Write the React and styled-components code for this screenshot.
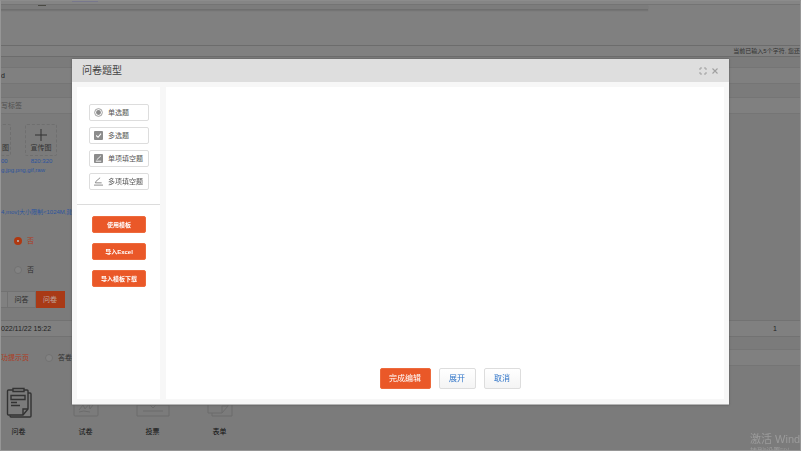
import React, { useState } from "react";
import styled, { createGlobalStyle, css } from "styled-components";

const GlobalStyle = createGlobalStyle`
  * {
    box-sizing: border-box;
  }

  body {
    margin: 0;
    overflow: hidden;
    background: #7b7b7b;
    font-family: "Liberation Sans", "Noto Sans CJK SC", sans-serif;
    font-size: 7px;
    line-height: 10px;
    color: #2a2a2a;
  }

  button,
  input {
    font-family: inherit;
  }
`;

const Page = styled.div`
  height: 100vh;
  overflow: hidden;
  white-space: nowrap;
  display: flex;
  flex-direction: column;
  border: 1px solid #969696;
  border-top-color: #8c8c8c;
`;

const Row = styled.div`
  flex: none;
  display: flex;
  align-items: center;
  height: ${(props) => props.$height}px;
`;

const Strip = styled(Row)`
  align-items: flex-start;
  padding-left: 71px;
  border-bottom: 1px solid #747474;
  background: #858585;
`;

const StripTab = styled.div`
  width: 26px;
  height: 1px;
  background: #77778c;
`;

const Editor = styled.div`
  flex: none;
  height: 52px;
  background: #808080;
  border-bottom: 1px solid #6c6c6c;
  display: flex;
  flex-direction: column;
  justify-content: space-between;
`;

const ShadowBar = styled.div`
  width: 81%;
  height: 5px;
  padding-left: 37px;
  background: #7c7c7c;
  border-bottom: 1px solid #6f6f6f;
  box-shadow: 0 1px 1px #747474;
`;

const Mark = styled.div`
  width: 8px;
  height: 1px;
  background: #4a4a44;
`;

const Counter = styled.div`
  height: 11px;
  border-top: 1px solid #6c6c6c;
  font-size: 6px;
  color: #303030;
  display: flex;
  align-items: center;
  justify-content: flex-end;
`;

const Field = styled.input`
  flex: none;
  display: block;
  width: 100%;
  height: 17px;
  padding: 0;
  margin: 0;
  border: solid #757575;
  border-width: 1px 0;
  background: #808080;
  color: #222;
  font-size: 7px;

  &::placeholder {
    color: #4f4f4f;
    opacity: 1;
  }
`;

const Uploads = styled.div`
  display: flex;
  gap: 14px;
`;

const UploadBox = styled.button`
  flex: none;
  display: flex;
  flex-direction: column;
  align-items: center;
  justify-content: flex-end;
  width: ${(props) => props.$width}px;
  height: 32px;
  padding: 0 0 2px;
  background: none;
  border: 1px dashed #6f6f6f;
  border-left-width: ${(props) => (props.$cut ? 0 : 1)}px;
  border-radius: 2px;
  font-size: 7px;
  line-height: 10px;
  color: #333;

  svg {
    width: 14px;
    height: 14px;
    margin-bottom: 1px;
  }
`;

const Note = styled.div`
  font-size: 6px;
  line-height: 9px;
  color: #2b549f;
`;

const Sizes = styled(Note)`
  display: flex;
  gap: 23px;
  margin-top: 1px;
`;

const RadioLabel = styled.label`
  display: flex;
  align-items: center;
  gap: 5px;
  color: ${(props) => (props.$active ? "#b03a1a" : "#303030")};
`;

const Radio = styled.input`
  appearance: none;
  width: 8px;
  height: 8px;
  margin: 0;
  border: 1px solid #727272;
  border-radius: 50%;
  background: #828282;

  &:checked {
    border: 3px solid #b03810;
    background: #bbb;
  }
`;

const TypeTabs = styled.div`
  display: flex;
  height: 17px;
`;

const TypeTab = styled.button`
  width: ${(props) => props.$width}px;
  padding: 0;
  border: 1px solid #727272;
  border-left-width: 0;
  background: #808080;
  font-size: 7px;
  line-height: 10px;
  color: #292929;

  ${(props) =>
    props.$active &&
    css`
      border-color: #a93a16;
      background: #a93a16;
      color: #c0a8a0;
    `}
`;

const Gap = styled.div`
  flex: none;
  height: ${(props) => props.$size}px;
`;

const Indent = styled.div`
  flex: none;
  padding-left: 13px;
`;

const DateRow = styled(Row)`
  justify-content: space-between;
  padding-right: 23px;
  background: #808080;
  border: solid #727272;
  border-width: 1px 0;
  color: #222;
`;

const ResultRow = styled(Row)`
  gap: 16px;
  color: #b03a1a;
`;

const ResultField = styled(Field)`
  flex: 1;
`;

const Kinds = styled.div`
  display: flex;
`;

const Kind = styled.div`
  width: 67px;
  display: flex;
  flex-direction: column;
  align-items: center;
  gap: 8px;
  color: #111;
  flex: none;
  margin-left: ${(props) => (props.$first ? -16 : 0)}px;

  svg {
    width: 34px;
    height: 32px;
    color: ${(props) => (props.$first ? "#333" : "#6c6c6c")};
  }
`;

const Watermark = styled.div`
  position: fixed;
  right: 0;
  bottom: 0;
  width: 51px;
  height: 19px;
  overflow: hidden;
  white-space: nowrap;
  color: #9b9b9b;
  font-size: 11px;
  line-height: 14px;

  small {
    display: block;
    font-size: 7px;
    line-height: 10px;
  }
`;

const Backdrop = styled.div`
  position: fixed;
  inset: 0;
  display: flex;
  align-items: flex-start;
  justify-content: center;
  padding: 59px 72px 0;
`;

const Modal = styled.div`
  width: 100%;
  height: calc(100vh - 105px);
  display: flex;
  flex-direction: column;
  background: #f7f7f7;
  border: 1px solid #b5b5b5;
  border-width: 0 0 1px;
  box-shadow: 0 0 2px #555;
`;

const ModalHeader = styled.header`
  flex: none;
  display: flex;
  align-items: center;
  justify-content: space-between;
  height: 23px;
  padding: 0 10px;
  background: #dedede;
`;

const Title = styled.h2`
  margin: 0;
  font-size: 10px;
  font-weight: 400;
  line-height: 14px;
  color: #444;
`;

const HeaderButtons = styled.div`
  display: flex;
  gap: 4px;
`;

const IconButton = styled.button`
  display: flex;
  width: 8px;
  height: 8px;
  padding: 0;
  border: none;
  background: none;
  color: #a0a0a0;
  cursor: pointer;
`;

const ModalBody = styled.div`
  flex: 1;
  display: flex;
  gap: 6px;
  padding: 5px;
`;

const Side = styled.aside`
  width: 83px;
  background: #fff;
`;

const QuestionTypes = styled.div`
  display: flex;
  flex-direction: column;
  gap: 6px;
  padding: 17px 11px 14px 12px;
  border-bottom: 1px solid #dcdcdc;
`;

const QuestionButton = styled.button`
  display: flex;
  align-items: center;
  gap: 5px;
  height: 17px;
  padding: 0 0 0 4px;
  border: 1px solid #ddd;
  border-radius: 2px;
  background: #fff;
  font-size: 7px;
  line-height: 10px;
  white-space: nowrap;
  color: #555;
  cursor: pointer;

  svg {
    flex: none;
    width: 9px;
    height: 9px;
    color: #8c8c8c;
  }
`;

const Actions = styled.div`
  display: flex;
  flex-direction: column;
  gap: 10px;
  padding: 11px 14px 0 15px;
`;

const PrimaryButton = styled.button`
  height: ${(props) => (props.$large ? 21 : 17)}px;
  width: ${(props) => (props.$large ? "51px" : "100%")};
  padding: 0;
  border: 1px solid #ed6a3c;
  border-radius: 2px;
  background: #ea5828;
  font-size: ${(props) => (props.$large ? 8 : 6)}px;
  font-weight: ${(props) => (props.$large ? 400 : 700)};
  line-height: 10px;
  white-space: nowrap;
  color: #fff;
  cursor: pointer;
`;

const PlainButton = styled.button`
  height: 21px;
  width: 37px;
  padding: 0;
  border: 1px solid #ddd;
  border-radius: 2px;
  background: linear-gradient(#fff, #f4f4f4);
  font-size: 8px;
  line-height: 10px;
  color: #2f74c8;
  cursor: pointer;
`;

const Canvas = styled.main`
  flex: 1;
  display: flex;
  align-items: flex-end;
  justify-content: center;
  gap: 8px;
  padding: 0 0 10px 10px;
  background: #fff;
`;

const SingleIcon = () => (
  <svg viewBox="0 0 10 10" fill="none" stroke="currentColor">
    <circle cx="5" cy="5" r="4.3" strokeWidth="0.9" />
    <circle cx="5" cy="5" r="2.7" fill="currentColor" stroke="none" />
  </svg>
);

const MultiIcon = () => (
  <svg viewBox="0 0 10 10">
    <rect width="10" height="10" rx="1" fill="currentColor" />
    <path d="M2.500 5l2 2 3.300-4" fill="none" stroke="#fff" strokeWidth="1.2" />
  </svg>
);

const BlankIcon = () => (
  <svg viewBox="0 0 10 10">
    <rect width="10" height="10" rx="1" fill="currentColor" />
    <path d="M3 6.500L7.700 2M2 8h6" fill="none" stroke="#fff" />
  </svg>
);

const MultiBlankIcon = () => (
  <svg viewBox="0 0 10 10" fill="none" stroke="currentColor">
    <path d="M6.800 0.800L2 5l-.5 1.500h7M0 9h10" strokeWidth="1.1" />
  </svg>
);

const ExpandIcon = () => (
  <svg viewBox="0 0 8 8" fill="none" stroke="currentColor">
    <path d="M1 3V1h2M5 1h2v2M7 5v2H5M3 7H1V5" />
  </svg>
);

const CloseIcon = () => (
  <svg viewBox="0 0 8 8" fill="none" stroke="currentColor">
    <path d="M1.500 1.500l5 5M6.500 1.500l-5 5" strokeWidth="1.1" />
  </svg>
);

const SurveyIcon = () => (
  <svg viewBox="0 0 34 32" fill="none" stroke="currentColor" strokeWidth="1.4">
    <path d="M11 3H6.500q-1 0-1 1v23q0 1 1 1H21l5-6V4q0-1-1-1h-3" />
    <path d="M11 1.500h11v3H11zM21 28v-6h5M26 6h2q1 0 1 1v22q0 1-1 1H9q-1 0-1-1.500" />
    <path d="M9 8.500h14v4H9zM9 15.500h6M9 18.500h9" />
  </svg>
);

const ExamIcon = () => (
  <svg viewBox="0 0 34 32" fill="none" stroke="currentColor">
    <rect x="5" y="1" width="24" height="28" rx="1" />
    <path d="M10 23l4-5 2 4 4-5 1 5 3-4M10 25q4-2 11 0" />
  </svg>
);

const VoteIcon = () => (
  <svg viewBox="0 0 34 32" fill="none" stroke="currentColor">
    <path d="M1 18h32v11H1zM4 18l2-6h22l2 6M7 24h20M13 17l4 4 6-6" />
  </svg>
);

const FormIcon = () => (
  <svg viewBox="0 0 34 32" fill="none" stroke="currentColor">
    <path d="M5 1h20v18l-6 7H5zM19 26v-7h6M25 5h4v24H9v-3" />
  </svg>
);

const questionTypes = [
  { label: "单选题", Icon: SingleIcon },
  { label: "多选题", Icon: MultiIcon },
  { label: "单项填空题", Icon: BlankIcon },
  { label: "多项填空题", Icon: MultiBlankIcon },
];

const kinds = [
  { label: "问卷", Icon: SurveyIcon },
  { label: "试卷", Icon: ExamIcon },
  { label: "投票", Icon: VoteIcon },
  { label: "表单", Icon: FormIcon },
];

const actions = ["使用模板", "导入Excel", "导入模板下载"];

const SettingsPage = () => {
  const [name, setName] = useState("d");

  return (
    <Page>
      <Strip $height={4}>
        <StripTab />
      </Strip>
      <Editor>
        <ShadowBar>
          <Mark />
        </ShadowBar>
        <Counter>当前已输入5个字符, 您还</Counter>
      </Editor>
      <Gap $size={10} />
      <Field
        aria-label="名称"
        value={name}
        onChange={(e) => setName(e.target.value)}
      />
      <Gap $size={13} />
      <Field aria-label="标签" placeholder="写标签" />
      <Gap $size={10} />
      <Uploads>
        <UploadBox $width={10} $cut>
          图
        </UploadBox>
        <UploadBox $width={32}>
          <svg viewBox="0 0 14 14" stroke="#333">
            <path d="M7 1v12M1 7h12" />
          </svg>
          宣传图
        </UploadBox>
      </Uploads>
      <Sizes>
        <span>00</span>
        <span>820:320</span>
      </Sizes>
      <Note>g,jpg,png,gif,raw</Note>
      <Gap $size={33} />
      <Note>4,mov]大小限制&lt;1024M,建</Note>
      <Gap $size={19} />
      <Indent>
        <RadioLabel $active>
          <Radio type="radio" name="open" defaultChecked />否
        </RadioLabel>
      </Indent>
      <Gap $size={19} />
      <Indent>
        <RadioLabel>
          <Radio type="radio" name="limit" />否
        </RadioLabel>
      </Indent>
      <Gap $size={16} />
      <TypeTabs>
        <TypeTab $width={7} aria-label="类型" />
        <TypeTab $width={28}>问答</TypeTab>
        <TypeTab $width={29} $active>
          问卷
        </TypeTab>
      </TypeTabs>
      <Gap $size={12} />
      <DateRow $height={17}>
        <span>022/11/22 15:22</span>
        <span>1</span>
      </DateRow>
      <Gap $size={12} />
      <ResultRow $height={17}>
        <span>功提示页</span>
        <RadioLabel>
          <Radio type="radio" name="result" />
          答卷后
        </RadioLabel>
        <ResultField aria-label="提示" />
      </ResultRow>
      <Gap $size={21} />
      <Kinds>
        {kinds.map(({ label, Icon }, index) => (
          <Kind key={label} $first={index === 0}>
            <Icon />
            {label}
          </Kind>
        ))}
      </Kinds>
      <Watermark>
        激活 Wind
        <small>转到“设置”以</small>
      </Watermark>
    </Page>
  );
};

const QuestionModal = () => (
  <Backdrop>
    <Modal role="dialog" aria-labelledby="modal-title">
      <ModalHeader>
        <Title id="modal-title">问卷题型</Title>
        <HeaderButtons>
          <IconButton aria-label="全屏">
            <ExpandIcon />
          </IconButton>
          <IconButton aria-label="关闭">
            <CloseIcon />
          </IconButton>
        </HeaderButtons>
      </ModalHeader>
      <ModalBody>
        <Side>
          <QuestionTypes>
            {questionTypes.map(({ label, Icon }) => (
              <QuestionButton key={label}>
                <Icon />
                {label}
              </QuestionButton>
            ))}
          </QuestionTypes>
          <Actions>
            {actions.map((label) => (
              <PrimaryButton key={label}>{label}</PrimaryButton>
            ))}
          </Actions>
        </Side>
        <Canvas>
          <PrimaryButton $large>完成编辑</PrimaryButton>
          <PlainButton>展开</PlainButton>
          <PlainButton>取消</PlainButton>
        </Canvas>
      </ModalBody>
    </Modal>
  </Backdrop>
);

const App = () => (
  <>
    <GlobalStyle />
    <SettingsPage />
    <QuestionModal />
  </>
);

export default App;
